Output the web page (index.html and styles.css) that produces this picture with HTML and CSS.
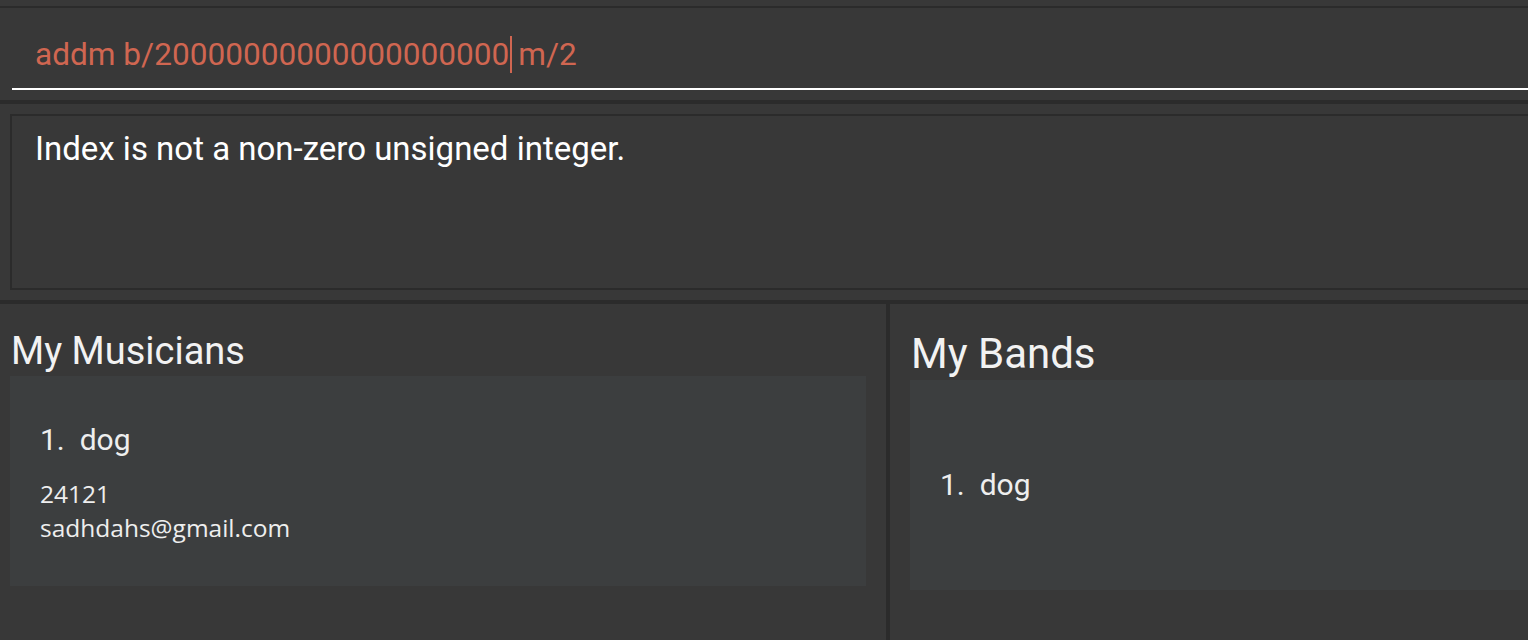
FILE: index.html
```html
<!DOCTYPE html>
<html lang="en">
<head>
<meta charset="utf-8">
<title>Band Manager</title>
<link rel="stylesheet" href="styles.css">
</head>
<body>
<div class="app">
  <div class="top-strip"></div>
  <div class="command-box">
    <div class="command-input"><span class="cmd-text">addm b/20000000000000000000</span><span class="caret"></span><span class="cmd-text">m/2</span></div>
  </div>
  <div class="band-sep"></div>
  <div class="result-area">
    <div class="result-box">Index is not a non-zero unsigned integer.</div>
  </div>
  <div class="band-sep"></div>
  <div class="lists">
    <section class="panel panel-left">
      <h2 class="panel-title">My Musicians</h2>
      <div class="card card-musician">
        <div class="card-name">1.&nbsp;&nbsp;dog</div>
        <div class="card-detail first">24121</div>
        <div class="card-detail">sadhdahs@gmail.com</div>
      </div>
    </section>
    <div class="divider"></div>
    <section class="panel panel-right">
      <h2 class="panel-title title-bands">My Bands</h2>
      <div class="card card-band">
        <div class="card-name">1.&nbsp;&nbsp;dog</div>
      </div>
    </section>
  </div>
</div>
</body>
</html>
```
FILE: styles.css
```css
html, body {
  margin: 0;
  padding: 0;
  background: #383838;
  height: 640px;
  overflow: hidden;
}
.app {
  width: 1528px;
  height: 640px;
  display: flex;
  flex-direction: column;
  font-family: Roboto, "Noto Sans", sans-serif;
  overflow: hidden;
}
.top-strip {
  height: 6px;
  border-bottom: 2px solid #2b2b2b;
  flex: none;
}
.command-box {
  height: 92px;
  padding-left: 12px;
  flex: none;
  box-sizing: border-box;
}
.command-input {
  height: 82px;
  border-bottom: 2px solid #ffffff;
  display: flex;
  align-items: center;
  padding-left: 23px;
  padding-top: 13px;
  box-sizing: border-box;
  color: #d06651;
  font-size: 31.6px;
  line-height: 40px;
}
.caret {
  width: 2px;
  height: 37px;
  background: #d06651;
  margin: 0 6px 0 1px;
}
.band-sep {
  height: 4px;
  background: #2b2b2b;
  flex: none;
}
.result-area {
  height: 196px;
  padding: 10px 0 10px 10px;
  box-sizing: border-box;
  flex: none;
}
.result-box {
  height: 176px;
  border: 2px solid #2b2b2b;
  border-right: none;
  box-sizing: border-box;
  padding: 13px 0 0 23px;
  color: #ffffff;
  font-size: 33px;
  line-height: 40px;
}
.lists {
  flex: 1;
  display: flex;
}
.panel {
  display: flex;
  flex-direction: column;
}
.panel-left {
  width: 886px;
  padding: 0 20px 0 10px;
  box-sizing: border-box;
}
.panel-right {
  flex: 1;
  padding-left: 20px;
}
.divider {
  width: 4px;
  background: #2b2b2b;
  flex: none;
}
.panel-title {
  margin: 0;
  font-weight: 400;
  color: #f2f2f2;
  font-size: 38px;
  line-height: 38px;
  height: 72px;
  display: flex;
  align-items: flex-end;
  padding: 0 0 6px 1px;
  box-sizing: border-box;
}
.panel-title.title-bands {
  font-size: 42px;
  line-height: 42px;
  height: 76px;
  padding-bottom: 5px;
}
.card {
  height: 210px;
  background: #3c3e3f;
  display: flex;
  flex-direction: column;
  justify-content: center;
  padding-left: 30px;
  box-sizing: border-box;
}
.card-musician {
  padding-top: 2px;
}
.card-band {
  padding-top: 0;
}
.card-name {
  color: #eeeeee;
  font-size: 30px;
  line-height: 40px;
}
.card-detail {
  font-family: "Open Sans", "Noto Sans", sans-serif;
  color: #eeeeee;
  font-size: 24.5px;
  line-height: 34px;
}
.card-detail.first {
  margin-top: 17px;
}
```
